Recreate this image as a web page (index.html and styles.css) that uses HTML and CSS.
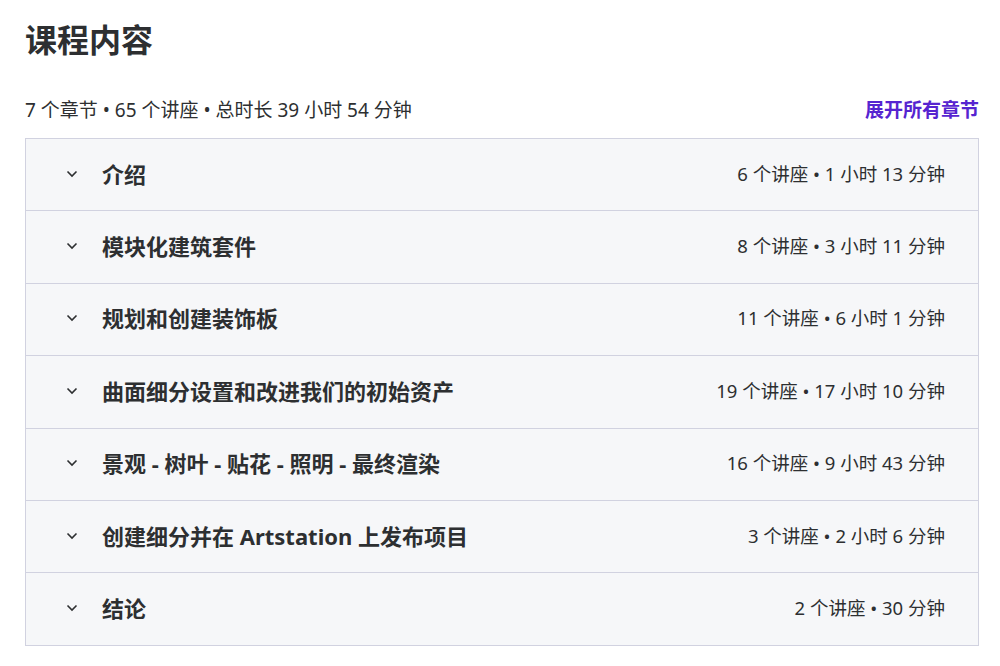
FILE: index.html
```html
<!DOCTYPE html>
<html lang="zh-CN">
<head>
<meta charset="UTF-8">
<meta name="viewport" content="width=device-width, initial-scale=1.0">
<title>课程内容</title>
<link rel="stylesheet" href="styles.css">
</head>
<body>

<div class="curriculum">
  <h2 class="title">课程内容</h2>

  <div class="summary">
    <span>7 个章节 • 65 个讲座 • 总时长 39 小时 54 分钟</span>
    <a class="expand" href="#">展开所有章节</a>
  </div>

  <div class="sections">
    <div class="section">
      <svg class="chevron" viewBox="0 0 12 8"><path d="M1.5 1.5 L6 6 L10.5 1.5"/></svg>
      <span class="name">介绍</span>
      <span class="meta">6 个讲座 • 1 小时 13 分钟</span>
    </div>
    <div class="section">
      <svg class="chevron" viewBox="0 0 12 8"><path d="M1.5 1.5 L6 6 L10.5 1.5"/></svg>
      <span class="name">模块化建筑套件</span>
      <span class="meta">8 个讲座 • 3 小时 11 分钟</span>
    </div>
    <div class="section">
      <svg class="chevron" viewBox="0 0 12 8"><path d="M1.5 1.5 L6 6 L10.5 1.5"/></svg>
      <span class="name">规划和创建装饰板</span>
      <span class="meta">11 个讲座 • 6 小时 1 分钟</span>
    </div>
    <div class="section">
      <svg class="chevron" viewBox="0 0 12 8"><path d="M1.5 1.5 L6 6 L10.5 1.5"/></svg>
      <span class="name">曲面细分设置和改进我们的初始资产</span>
      <span class="meta">19 个讲座 • 17 小时 10 分钟</span>
    </div>
    <div class="section">
      <svg class="chevron" viewBox="0 0 12 8"><path d="M1.5 1.5 L6 6 L10.5 1.5"/></svg>
      <span class="name">景观 - 树叶 - 贴花 - 照明 - 最终渲染</span>
      <span class="meta">16 个讲座 • 9 小时 43 分钟</span>
    </div>
    <div class="section">
      <svg class="chevron" viewBox="0 0 12 8"><path d="M1.5 1.5 L6 6 L10.5 1.5"/></svg>
      <span class="name">创建细分并在 Artstation 上发布项目</span>
      <span class="meta">3 个讲座 • 2 小时 6 分钟</span>
    </div>
    <div class="section">
      <svg class="chevron" viewBox="0 0 12 8"><path d="M1.5 1.5 L6 6 L10.5 1.5"/></svg>
      <span class="name">结论</span>
      <span class="meta">2 个讲座 • 30 分钟</span>
    </div>
  </div>
</div>

</body>
</html>
```

FILE: styles.css
```css
/* Reset */
* {
  margin: 0;
  padding: 0;
  box-sizing: border-box;
}

body {
  font-family: "Noto Sans", "Noto Sans CJK SC", sans-serif;
  color: #2d2f31;
  background: #fff;
}

/* Page block */
.curriculum {
  width: 954px;
  margin: 18px 0 0 25px;
}

.title {
  font-size: 32px;
  line-height: 44px;
  font-weight: 700;
}

/* Summary line */
.summary {
  display: flex;
  justify-content: space-between;
  align-items: center;
  margin: 34px 0 14px;
  font-size: 19px;
  line-height: 28px;
}

.expand {
  color: #5624d0;
  font-weight: 700;
  text-decoration: none;
}

/* Section list */
.sections {
  border: 1px solid #d1d2e0;
}

.section {
  display: flex;
  align-items: center;
  height: 71.4px;
  padding: 0 33px 4px 40px;
  background: #f6f7f9;
}

.section + .section {
  height: 72.4px;
  border-top: 1px solid #d1d2e0;
}

.chevron {
  width: 12px;
  height: 8px;
  margin: 2px 24px 0 0;
  fill: none;
  stroke: #2d2f31;
  stroke-width: 1.6;
}

.name {
  font-size: 22px;
  font-weight: 700;
  flex: 1;
}

.meta {
  font-size: 18.5px;
}
```
